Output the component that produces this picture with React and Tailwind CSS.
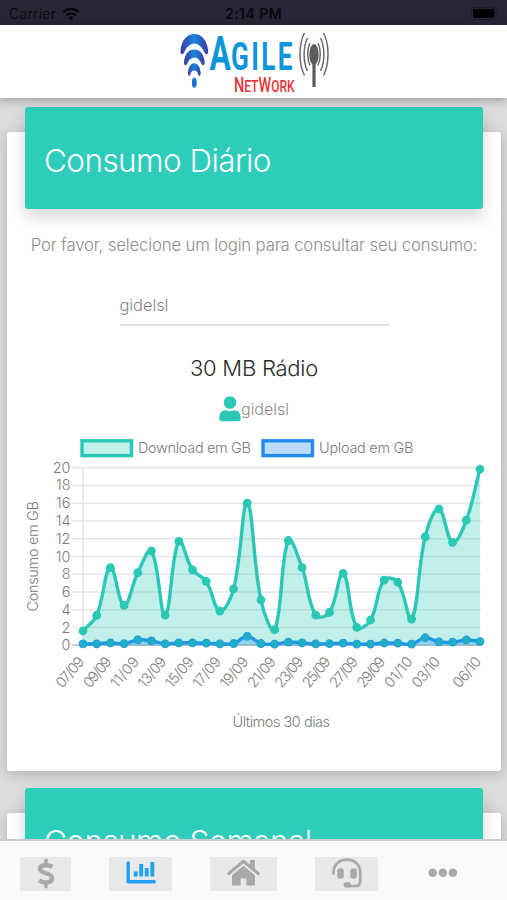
const download = [
  1.61, 3.38, 8.74, 4.5, 8.18, 10.62, 3.4, 11.7, 8.5, 7.2, 3.86, 6.36, 16, 5.1,
  1.76, 11.8, 8.74, 3.4, 3.7, 8.1, 2.02, 2.85, 7.35, 7.1, 2.96, 12.2, 15.35,
  11.6, 14.1, 19.85,
];

const upload = [
  0.15, 0.17, 0.28, 0.18, 0.6, 0.5, 0.17, 0.28, 0.28, 0.24, 0.17, 0.2, 1, 0.2,
  0.14, 0.35, 0.28, 0.15, 0.18, 0.24, 0.14, 0.14, 0.26, 0.24, 0.14, 0.85, 0.38,
  0.35, 0.6, 0.42,
];

const days = [
  [0, "07/09"],
  [2, "09/09"],
  [4, "11/09"],
  [6, "13/09"],
  [8, "15/09"],
  [10, "17/09"],
  [12, "19/09"],
  [14, "21/09"],
  [16, "23/09"],
  [18, "25/09"],
  [20, "27/09"],
  [22, "29/09"],
  [24, "01/10"],
  [26, "03/10"],
  [29, "06/10"],
];

const ticks = [0, 2, 4, 6, 8, 10, 12, 14, 16, 18, 20];

const LEFT = 76;
const RIGHT = 473;
const TOP = 32.7;
const BOTTOM = 210.3;

const px = (i) => LEFT + (i * (RIGHT - LEFT)) / 29;
const py = (v) => BOTTOM - (v * (BOTTOM - TOP)) / 20;
const clamp = (y) => Math.min(BOTTOM, Math.max(TOP, y));

// smooth line with tension 0.4, control points kept inside the chart area
function curve(values) {
  const pts = values.map((v, i) => ({ x: px(i), y: py(v) }));
  const ctrl = pts.map((p, i) => {
    const prev = pts[i - 1] || p;
    const next = pts[i + 1] || p;
    const d1 = Math.hypot(p.x - prev.x, p.y - prev.y);
    const d2 = Math.hypot(next.x - p.x, next.y - p.y);
    const a = (0.4 * d1) / (d1 + d2);
    const b = (0.4 * d2) / (d1 + d2);
    return {
      inX: p.x - a * (next.x - prev.x),
      inY: clamp(p.y - a * (next.y - prev.y)),
      outX: p.x + b * (next.x - prev.x),
      outY: clamp(p.y + b * (next.y - prev.y)),
    };
  });

  let d = `M${pts[0].x} ${pts[0].y}`;
  for (let i = 1; i < pts.length; i++) {
    const c = ctrl[i - 1];
    const n = ctrl[i];
    d += ` C${c.outX} ${c.outY} ${n.inX} ${n.inY} ${pts[i].x} ${pts[i].y}`;
  }
  return d;
}

function Series({ values, stroke, fill, dot, dotStroke }) {
  const d = curve(values);
  return (
    <g>
      <path d={`${d} L${RIGHT} ${BOTTOM} L${LEFT} ${BOTTOM} Z`} fill={fill} />
      <path d={d} fill="none" stroke={stroke} strokeWidth="3.4" strokeLinejoin="round" />
      {values.map((v, i) => (
        <circle key={i} cx={px(i)} cy={py(v)} r="3.8" fill={dot} stroke={dotStroke} strokeWidth="1.2" />
      ))}
    </g>
  );
}

function Chart() {
  return (
    <svg width="494" height="305" viewBox="0 0 494 305" className="block text-[14.5px]" fill="#7c7c7c">
      <rect x="75" y="5.8" width="49.5" height="14.8" fill="#c2f0eb" stroke="#2bc8b7" strokeWidth="3.4" />
      <text x="131" y="18.3" textLength="113">Download em GB</text>
      <rect x="256" y="5.8" width="49.5" height="14.8" fill="#badbfb" stroke="#228bee" strokeWidth="3.4" />
      <text x="312" y="18.3" textLength="94.5">Upload em GB</text>

      {ticks.map((t) => (
        <g key={t}>
          <path d={`M65 ${py(t)}H${RIGHT + 1}`} stroke={t === 0 ? "#bdbdbd" : "#e6e6e6"} strokeWidth="1.4" />
          <text x="63.5" y={py(t) + 5} textAnchor="end">{t}</text>
        </g>
      ))}
      <path d={`M${LEFT} ${TOP}V${BOTTOM}`} stroke="#e2e2e2" strokeWidth="1.4" />

      <Series values={download} stroke="#2bc8b7" fill="rgba(43,200,183,0.29)" dot="#2bc8b7" dotStroke="#2bc8b7" />
      <Series values={upload} stroke="#2196ea" fill="rgba(33,150,243,0.3)" dot="#1fb0c4" dotStroke="#1f9fdc" />

      {days.map(([i, label]) => (
        <text
          key={label}
          textAnchor="end"
          textLength="35"
          transform={`translate(${px(i) + 2} 227) rotate(-50)`}
        >
          {label}
        </text>
      ))}

      <text transform="translate(30.7 176.5) rotate(-90)" textLength="110.5">Consumo em GB</text>
      <text x="225.5" y="291.5" textLength="97.5">Últimos 30 dias</text>
    </svg>
  );
}

function Logo() {
  return (
    <svg width="150" height="68" viewBox="179 29 150 68" className="block">
      <defs>
        <linearGradient id="arc" x1="0" y1="0" x2="1" y2="0">
          <stop offset="0" stopColor="#3d3aa5" />
          <stop offset="0.5" stopColor="#1687dc" />
          <stop offset="1" stopColor="#3d3aa5" />
        </linearGradient>
      </defs>
      <g fill="url(#arc)">
        <path d="M180.500 51C181.500 40 187 34 194.300 34S207 40 208.200 51C208.300 54.500 206 55.500 204.500 52.500C202 47 198.500 43.500 194.300 43.500S186.500 47 184.200 52.500C182.700 55.500 180.300 54.500 180.500 51Z" />
        <path d="M184 62C184.800 53.500 189 49.500 194.300 49.500S203.800 53.500 204.700 62C204.800 65.500 202.500 66.500 201.300 63.500C199.500 59.500 197.500 57.500 194.300 57.500S189 59.500 187.300 63.500C186 66.500 183.800 65.500 184 62Z" />
        <path d="M188 73C188.500 66.500 191 63.200 194.300 63.200S200 66.500 200.700 73C200.700 76 199 77 198.200 74.500C197.300 71.500 196.300 70.500 194.300 70.500S191.300 71.500 190.400 74.500C189.500 77 187.900 76 188 73Z" />
      </g>
      <ellipse cx="194.300" cy="82.700" rx="2.400" ry="5" fill="#1274cf" />
      <text
        transform="translate(209.500 69.700) scale(0.66 1)"
        fill="#0d95dc"
        fontSize="39.500"
        letterSpacing="3.600"
        className="font-['Roboto'] font-bold"
      >
        <tspan fontSize="48" letterSpacing="0.500">A</tspan>GILE
      </text>
      <text
        transform="translate(234 92) scale(0.73 1)"
        fill="#ea3438"
        fontSize="16.500"
        className="font-['Roboto'] font-medium"
      >
        <tspan fontSize="19.700">N</tspan>ET<tspan fontSize="19.700">W</tspan>ORK
      </text>
      <g fill="none" stroke="#6b6b6b" strokeWidth="1.500">
        <path d="M304.500 33C298.500 44 298.500 64 304.500 75.500" />
        <path d="M307.500 38C303 47 303 62 307.500 71" />
        <path d="M310 43C307 49 307 59 310 65.500" />
        <path d="M323.500 33C329.500 44 329.500 64 323.500 75.500" />
        <path d="M320.500 38C325 47 325 62 320.500 71" />
        <path d="M318 43C321 49 321 59 318 65.500" />
      </g>
      <ellipse cx="314" cy="54.500" rx="4.700" ry="10.500" fill="#5c5c5c" />
      <path d="M314 60V87" stroke="#5c5c5c" strokeWidth="3.200" />
    </svg>
  );
}

function StatusBar() {
  return (
    <div className="relative h-[25px] shrink-0 bg-[#262637] flex items-center justify-between pl-[9px] pr-[8px] pt-[2px] text-[#08080d]">
      <div className="flex items-center gap-[6px]">
        <span className="text-[14px] tracking-[0.35px]">Carrier</span>
        <svg width="18" height="14" viewBox="0 0 18 14" fill="none" stroke="#08080d" strokeWidth="2.500">
          <path d="M1.300 5.200C5.700 .8 12.300 .8 16.700 5.200" />
          <path d="M4.300 8.400C7 5.700 11 5.700 13.700 8.400" />
          <path d="M9 13.500L6.200 10.600C7.800 9.200 10.200 9.200 11.800 10.600Z" fill="#08080d" stroke="none" />
        </svg>
      </div>
      <span className="absolute left-0 w-full text-center text-[14px] font-semibold tracking-[0.45px]">2:14 PM</span>
      <svg width="28" height="13" viewBox="0 0 28 13">
        <rect x="0.500" y="0.500" width="24.500" height="12" rx="3" fill="none" stroke="#1c1c29" />
        <rect x="2" y="2" width="21.500" height="9" rx="2" fill="#000" />
        <path d="M26.500 4.500C28 5 28 8 26.500 8.500Z" fill="#1a1a26" />
      </svg>
    </div>
  );
}

function Card({ title, className, children }) {
  return (
    <section className={`ml-[7px] mr-[6px] bg-white rounded-[3px] shadow-[0_3px_14px_rgba(0,0,0,0.2)] ${className}`}>
      <div className="relative -top-[24.6px] ml-[18px] mr-[18.5px] h-[101.5px] rounded-[3px] bg-[#2dccbb] shadow-[0_8px_16px_rgba(0,0,0,0.16)] flex items-center px-[19px] pt-[6px]">
        <h2 className="text-[31.5px] leading-none text-white font-light tracking-[-0.57px]">{title}</h2>
      </div>
      {children}
    </section>
  );
}

function TabBar() {
  return (
    <nav className="h-[61px] shrink-0 bg-[#fafafa] border-t-2 border-[#cccccc] flex items-start pt-[16px] pl-[20px] text-[#a9a9a9]">
      <div className="w-[51px] h-[34px] bg-[#e9e9e9] flex justify-center pt-[1px]">
        <svg width="18" height="31" viewBox="0 0 18 31" fill="none" stroke="currentColor" strokeWidth="4.400">
          <path d="M9 .8V7M9 24V30.200" strokeWidth="3.400" />
          <path d="M15.300 8.800C12 6.800 3 6 3 10.700C3 16.200 15 14.300 15 20C15 25.500 6.500 25.500 2 22.200" />
        </svg>
      </div>
      <div className="ml-[38px] w-[63px] h-[34px] bg-[#e9e9e9] flex justify-center pt-[4px] text-[#22a0f2]">
        <svg width="30" height="24" viewBox="0 0 30 24" fill="none" stroke="currentColor" strokeWidth="3.400">
          <path d="M2.200 2V20.800H28.300" strokeLinejoin="round" strokeLinecap="round" />
          <path d="M9.700 15.500V10.500M15.200 15.500V3M20.700 15.500V7M26.300 15.500V1" strokeWidth="3.900" />
        </svg>
      </div>
      <div className="ml-[38px] w-[67px] h-[34px] bg-[#e9e9e9] flex justify-center pt-[2px]">
        <svg width="33" height="27" viewBox="0 0 33 27" fill="currentColor">
          <path d="M1.800 14.500L16.500 2.300L31.200 14.500" fill="none" stroke="currentColor" strokeWidth="3.200" strokeLinecap="round" strokeLinejoin="round" />
          <path d="M23 1H27.800V11L23 7.200Z" />
          <path d="M16.500 6.800L28 16.200V25Q28 26.500 26.500 26.500H19.300V19.500H13.700V26.500H6.500Q5 26.500 5 25V16.200Z" />
        </svg>
      </div>
      <div className="ml-[38px] w-[63px] h-[34px] bg-[#e9e9e9] flex justify-center pt-[1px]">
        <svg width="30" height="31" viewBox="0 0 30 31" fill="none" stroke="currentColor" strokeWidth="2.700" strokeLinecap="round">
          <path d="M1.600 15.500C1 7 7 1.600 15 1.600S28.300 7.200 28.300 15V22.500Q28.300 28 23.500 28H15" />
          <rect x="5.300" y="10.300" width="6.400" height="10.500" rx="2.800" fill="currentColor" stroke="none" />
          <rect x="18.300" y="10.300" width="6.600" height="10.500" rx="2.800" fill="currentColor" stroke="none" />
          <rect x="11.500" y="24.300" width="7.500" height="5.200" rx="2.500" fill="currentColor" stroke="none" />
        </svg>
      </div>
      <svg width="30" height="10" viewBox="0 0 30 10" fill="currentColor" className="ml-[50px] mt-[11px]">
        <circle cx="4.700" cy="4.800" r="4.300" />
        <circle cx="14.800" cy="4.800" r="4.300" />
        <circle cx="24.900" cy="4.800" r="4.300" />
      </svg>
    </nav>
  );
}

export default function App() {
  return (
    <div className="w-[507px] h-[900px] overflow-hidden flex flex-col bg-[#dcdcdc] font-['Inter','Liberation_Sans',sans-serif] font-light">
      <StatusBar />

      <header className="relative z-10 h-[73px] shrink-0 bg-white shadow-[0_2px_9px_rgba(0,0,0,0.3)] flex justify-center pt-[4px]">
        <Logo />
      </header>

      <main className="flex-1 min-h-0 overflow-hidden">
        <Card title="Consumo Diário" className="mt-[33.8px] h-[639px]">
          <p className="text-center text-[16.8px] leading-6 text-[#8e8e8e] tracking-[-0.18px]">
            Por favor, selecione um login para consultar seu consumo:
          </p>
          <div className="ml-[112.5px] mt-[35.7px] w-[269px] h-[33px] border-b-2 border-[#e0e0e0] text-[16.5px] leading-6 text-[#868686] tracking-[-0.1px]">
            gidelsl
          </div>
          <h3 className="mt-[28px] text-center text-[22px] leading-7 text-[#2c2c2c] tracking-[-0.25px]">30 MB Rádio</h3>
          <div className="mt-[13px] flex justify-center items-center text-[16px] leading-7 text-[#8e8e8e]">
            <svg width="22" height="26" viewBox="0 0 22 26" fill="#2bc8b7">
              <circle cx="11" cy="6.500" r="6.300" />
              <path d="M0.300 22C0.300 17 3 14.300 6.500 14.300C8 14.300 9 15.200 11 15.200S14 14.300 15.500 14.300C19 14.300 21.700 17 21.700 22Q21.700 25.300 19 25.300H3Q0.300 25.300 0.300 22Z" />
            </svg>
            gidelsl
          </div>
          <div className="mt-[12px]">
            <Chart />
          </div>
        </Card>

        <Card title="Consumo Semanal" className="mt-[42.2px] h-[639px]" />
      </main>

      <TabBar />
    </div>
  );
}
